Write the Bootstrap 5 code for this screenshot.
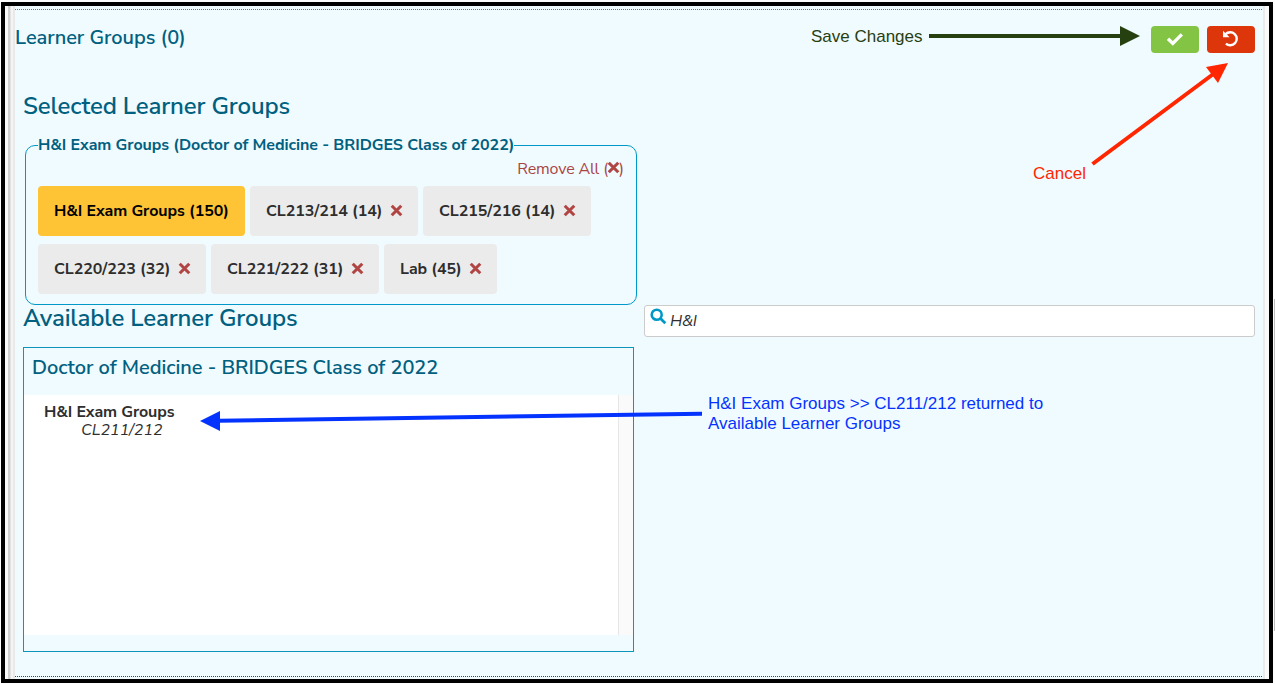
<!DOCTYPE html>
<html lang="en">
<head>
<meta charset="utf-8">
<meta name="viewport" content="width=device-width, initial-scale=1">
<title>Learner Groups</title>
<link href="https://cdn.jsdelivr.net/npm/bootstrap@5.3.0/dist/css/bootstrap.min.css" rel="stylesheet">
<style>
body{width:1275px;height:684px;overflow:hidden;background:#fdfdfd;font-family:"Nunito Sans",Lato,sans-serif;font-size:16px;line-height:20px;color:#2e2e2e}
.frame{width:1272px;height:681px;margin:2px 0 0 1px;border:4px solid #000;background:linear-gradient(90deg,#fafafa 0 3px,#cfcfcf 3px 5px,#e2e2e2 5px 6px,#f4f4f4 6px 8px,#e9e9e9 8px 10px,#fafafa 10px)}
.sheet{width:1250px;margin-left:10px;background:#f0fbff;border-right:2px solid #ebebeb;height:673px;padding-top:3px}
.dots{height:1px;flex:none}
.dots-top{background:repeating-linear-gradient(90deg,#b4611a 0 1px,#f0fbff 1px 2px)}
.dots-end{background:repeating-linear-gradient(90deg,#006080 0 1px,#f0fbff 1px 2px);margin-top:auto;margin-bottom:2px}
.teal{color:#006080;font-weight:600}
.t20{font-size:20px;line-height:24px;margin:0;letter-spacing:-.05px}
.t24{font-size:24px;line-height:28px;margin:0;letter-spacing:-.15px}
.topbar{height:69px;padding:16px 8px 0 0}
.act{width:48px;height:27px;padding:0 0 2px;border:0;border-radius:4px}
.act svg{display:block;margin:auto}
.act-ok{background:#84c444}
.act-undo{background:#dc360a}
.cols{padding:13px 8px 0}
.picked{width:612px;height:160px;margin:25px 0 0 2px;border:1px solid #0099c7;border-radius:10px;padding:0 12px}
.picked-title{width:476px;margin:-11px 0 0;font-weight:700;color:#006080;background:#f0fbff;white-space:nowrap;letter-spacing:-.06px}
.rm{color:#a94442;height:27px;margin-top:4px;text-align:right;letter-spacing:-.15px}
.rm svg{margin:-5px -1px 0}
.chips{column-gap:5px}
.chip{height:50px;width:168px;padding-left:16px;background:#ebebeb;border-radius:4px;font-weight:700;white-space:nowrap;margin-bottom:8px;letter-spacing:-.08px}
.chip svg{margin:-2px 0 0 8px}
.chip-main{width:207px;background:#ffc336;color:#000}
.chip-lab{width:113px}
.chip-lab svg{margin-left:7px}
.avail-title{margin-top:-1px}
.find{width:611px;height:32px;border:1px solid #ccc;border-radius:3px;background:#fff;padding:0 5px;font-style:italic}
.find svg{margin:2px 3px 0 0}
.find span{margin-top:5px;letter-spacing:-.2px}
.avail{width:611px;height:305px;margin-top:10px;border:1px solid #0d95bd}
.avail h4{padding:8px 0 0 8px;height:47px}
.list{height:240px;background:#fff}
.list ul{width:594px;padding:8px 0 0 20px;line-height:18px;letter-spacing:-.1px}
.list .child{padding-left:37px;letter-spacing:0}
.track{width:15px;background:#fafafa;border-left:1px solid #e6e6e6}
.note{position:absolute;white-space:nowrap;font-family:"Liberation Sans",sans-serif;font-size:17px;line-height:20px}
.note-save{left:811px;top:27px;color:#274010}
.note-cancel{left:1033px;top:164px;color:#ff2600}
.note-back{left:708px;top:394px;color:#0433ff}
.overlay{position:absolute;left:0;top:0;pointer-events:none}
.thumb{position:absolute;left:1274px;top:299px;width:1px;height:332px;background:#bbb}
</style>
</head>
<body class="position-relative">
<svg class="d-none"><symbol id="x" viewBox="0 0 12 12"><path d="M1.6 1.6 10.4 10.4M10.4 1.6 1.6 10.4" stroke="#b04543" stroke-width="2.8" fill="none"/></symbol></svg>
<div class="d-flex flex-column"><main class="frame">
<section class="sheet d-flex flex-column">
<div class="dots dots-top"></div>
<header class="topbar d-flex justify-content-between align-items-start">
<h3 class="teal t20">Learner Groups (0)</h3>
<div class="d-flex gap-2">
<button class="btn act act-ok" aria-label="Save"><svg width="18" height="14" viewBox="0 0 18 14"><path d="M2 6.7 6.8 11.4 15.8 2.3" fill="none" stroke="#fff" stroke-width="3.3"/></svg></button>
<button class="btn act act-undo" aria-label="Cancel"><svg width="18" height="17" viewBox="0 0 18 17"><path d="M3.6 4.2A6.5 6.5 0 1 1 3.9 13.6" fill="none" stroke="#fff" stroke-width="2.4"/><path d="M1 .8V7.2H7.6Z" fill="#fff"/></svg></button>
</div></header>
<div class="cols">
<h2 class="teal t24">Selected Learner Groups</h2>
<div class="picked">
<div class="picked-title">H&amp;I Exam Groups (Doctor of Medicine - BRIDGES Class of 2022)</div>
<div class="rm">Remove All (<svg width="13" height="13"><use href="#x"/></svg>)</div>
<div class="chips d-flex flex-wrap">
<div class="chip chip-main d-flex align-items-center">H&amp;I Exam Groups (150)</div>
<div class="chip d-flex align-items-center">CL213/214 (14)<svg width="13" height="13"><use href="#x"/></svg></div>
<div class="chip d-flex align-items-center">CL215/216 (14)<svg width="13" height="13"><use href="#x"/></svg></div>
<div class="chip d-flex align-items-center">CL220/223 (32)<svg width="13" height="13"><use href="#x"/></svg></div>
<div class="chip d-flex align-items-center">CL221/222 (31)<svg width="13" height="13"><use href="#x"/></svg></div>
<div class="chip chip-lab d-flex align-items-center">Lab (45)<svg width="13" height="13"><use href="#x"/></svg></div>
</div></div>
<div class="d-flex justify-content-between">
<h2 class="teal t24 avail-title">Available Learner Groups</h2>
<div class="find d-flex align-items-start"><svg width="17" height="17" viewBox="0 0 17 17"><circle cx="6.7" cy="6.7" r="5" fill="none" stroke="#0099c7" stroke-width="2.6"/><path d="M10.5 10.5 15.3 15.3" stroke="#0099c7" stroke-width="2.8"/></svg><span>H&amp;I</span></div>
</div>
<div class="avail">
<h4 class="teal t20">Doctor of Medicine - BRIDGES Class of 2022</h4>
<div class="list d-flex"><ul class="list-unstyled mb-0"><li class="fw-bold">H&amp;I Exam Groups</li><li class="fst-italic child">CL211/212</li></ul><div class="track"></div></div>
</div></div>
<div class="dots dots-end"></div>
</section></main></div>
<div class="thumb"></div>
<svg class="overlay" width="1275" height="684">
<g fill="#274010" stroke="#274010"><path d="M929 36H1122" stroke-width="4"/><path d="M1120 26 1140 36 1120 46Z" stroke="none"/></g>
<g fill="#ff2600" stroke="#ff2600"><path d="M1092.5 164 1214 73.5" stroke-width="4"/><path d="M1228 63 1206 67 1218 83Z" stroke="none"/></g>
<g fill="#0433ff" stroke="#0433ff"><path d="M702 413.8 218 420.7" stroke-width="4"/><path d="M200 421 220 411 220 431Z" stroke="none"/></g>
</svg>
<div class="note note-save">Save Changes</div>
<div class="note note-cancel">Cancel</div>
<div class="note note-back">H&amp;I Exam Groups &gt;&gt; CL211/212 returned to<br>Available Learner Groups</div>
<script src="https://cdn.jsdelivr.net/npm/bootstrap@5.3.0/dist/js/bootstrap.bundle.min.js"></script>
</body>
</html>
